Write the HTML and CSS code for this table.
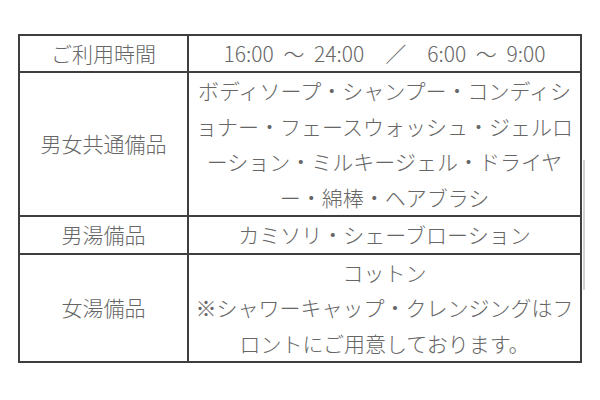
FILE: index.html
```html
<!DOCTYPE html>
<html lang="ja">
<head>
<meta charset="utf-8">
<title>ご利用案内</title>
<link rel="stylesheet" href="styles.css">
</head>
<body>
<div class="page">
  <table class="info">
    <tr>
      <th>ご利用時間</th>
      <td class="time">16:00 ～ 24:00　／　6:00 ～ 9:00</td>
    </tr>
    <tr>
      <th>男女共通備品</th>
      <td>ボディソープ・シャンプー・コンディシ<br>ョナー・フェースウォッシュ・ジェルロ<br>ーション・ミルキージェル・ドライヤ<br>ー・綿棒・ヘアブラシ</td>
    </tr>
    <tr>
      <th>男湯備品</th>
      <td>カミソリ・シェーブローション</td>
    </tr>
    <tr>
      <th>女湯備品</th>
      <td>コットン<br>※シャワーキャップ・クレンジングはフ<br>ロントにご用意しております。</td>
    </tr>
  </table>
</div>
</body>
</html>
```

FILE: styles.css
```css
html, body {
  margin: 0;
  padding: 0;
  background: #ffffff;
}

body {
  font-family: "Noto Sans CJK JP", "Noto Sans", sans-serif;
  color: #666666;
}

.page {
  position: relative;
  padding: 34px 0 0 18px;
  width: 564px;
}

.page::after {
  content: "";
  position: absolute;
  left: 583px;
  top: 160px;
  width: 2px;
  height: 130px;
  background: #d2d2d2;
}

.info {
  width: 564px;
  border-collapse: collapse;
  table-layout: fixed;
  border: 2px solid #3e3e3e;
}

.info th,
.info td {
  border: 2px solid #3e3e3e;
  padding: 0;
  font-size: 21px;
  font-weight: 300;
  line-height: 35.5px;
  text-align: center;
  vertical-align: middle;
  white-space: nowrap;
}

.info th {
  width: 167px;
}

.info tr:first-child th,
.info tr:first-child td {
  line-height: 35px;
}

.time {
  word-spacing: 5px;
}
```
